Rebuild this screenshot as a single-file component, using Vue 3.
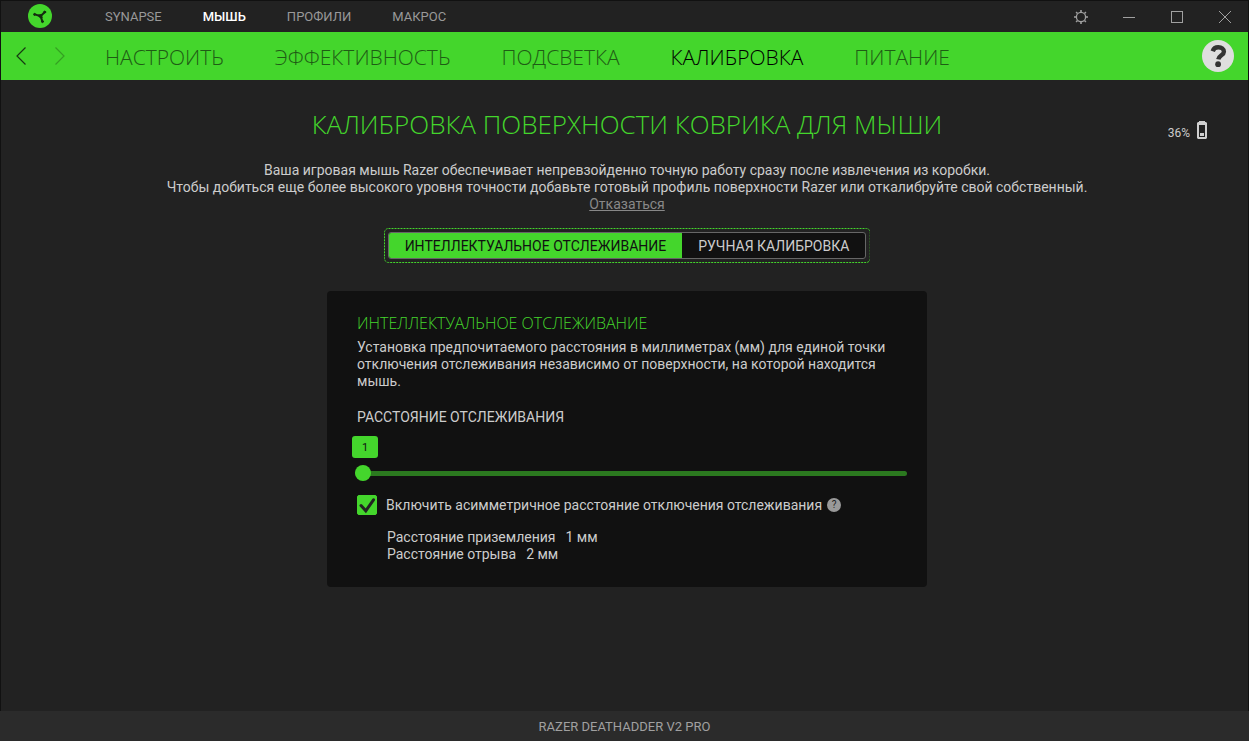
<script setup>
import { ref } from 'vue'

const topTabs = ['SYNAPSE', 'МЫШЬ', 'ПРОФИЛИ', 'МАКРОС']
const activeTop = ref('МЫШЬ')

const sections = ['НАСТРОИТЬ', 'ЭФФЕКТИВНОСТЬ', 'ПОДСВЕТКА', 'КАЛИБРОВКА', 'ПИТАНИЕ']
const activeSection = ref('КАЛИБРОВКА')

const modes = ['ИНТЕЛЛЕКТУАЛЬНОЕ ОТСЛЕЖИВАНИЕ', 'РУЧНАЯ КАЛИБРОВКА']
const activeMode = ref(modes[0])

const distance = ref(1)
const asymmetric = ref(true)
</script>

<template>
  <div class="window">
    <header class="titlebar">
      <div class="lead">
        <svg class="logo" viewBox="0 0 24 24" width="24" height="24" aria-hidden="true">
          <circle cx="12" cy="12" r="12" fill="#44d62c" />
          <g stroke="#142b10" stroke-width="2" stroke-linecap="round" fill="#142b10">
            <path d="M12.5 12.2L7 10.4M12.5 12.2L16.6 8.2M12.5 12.2L14.3 17.2" />
            <path d="M10.5 11L13.5 10.5L14.2 14L12 13.5Z" stroke-width="1" />
            <circle cx="6.6" cy="10.4" r="1" stroke-width="1" />
            <circle cx="16.7" cy="8.1" r="1" stroke-width="1" />
            <circle cx="14.5" cy="17.6" r="1" stroke-width="1" />
          </g>
        </svg>
      </div>
      <nav class="top-tabs" aria-label="Разделы">
        <a
          v-for="tab in topTabs"
          :key="tab"
          href="#"
          :class="{ active: tab === activeTop }"
          @click.prevent="activeTop = tab"
        >{{ tab }}</a>
      </nav>
      <div class="controls">
        <button type="button" aria-label="Настройки">
          <svg viewBox="0 0 16 16" width="16" height="16" fill="none" stroke="#a0a0a0">
            <circle cx="8" cy="8" r="4.6" stroke-width="1.3" />
            <path stroke-width="1.6" d="M8 1v2M8 13v2M1 8h2M13 8h2M3.1 3.1l1.2 1.2M11.7 11.7l1.2 1.2M3.1 12.9l1.2-1.2M11.7 4.3l1.2-1.2" />
          </svg>
        </button>
        <button type="button" aria-label="Свернуть">
          <svg viewBox="0 0 14 14" width="14" height="14" fill="none" stroke="#a0a0a0">
            <path d="M1 7.5h12" />
          </svg>
        </button>
        <button type="button" aria-label="Развернуть">
          <svg viewBox="0 0 14 14" width="14" height="14" fill="none" stroke="#a0a0a0">
            <rect x="1.5" y="1.5" width="11" height="11" />
          </svg>
        </button>
        <button type="button" aria-label="Закрыть">
          <svg viewBox="0 0 14 14" width="14" height="14" fill="none" stroke="#a0a0a0">
            <path d="M1 1l12 12M13 1L1 13" />
          </svg>
        </button>
      </div>
    </header>

    <div class="navbar">
      <div class="lead arrows">
        <button type="button" aria-label="Назад">
          <svg viewBox="0 0 10 18" width="10" height="18" fill="none" stroke="#173a12" stroke-width="1.2">
            <path d="M9.5 .5L1 9l8.500 8.500" />
          </svg>
        </button>
        <button type="button" aria-label="Вперёд" disabled>
          <svg viewBox="0 0 10 18" width="10" height="18" fill="none" stroke="#35a023" stroke-width="1.2">
            <path d="M.5 .5L9 9L.5 17.500" />
          </svg>
        </button>
      </div>
      <nav class="sections" aria-label="Мышь">
        <a
          v-for="item in sections"
          :key="item"
          href="#"
          :class="{ active: item === activeSection }"
          @click.prevent="activeSection = item"
        >{{ item }}</a>
      </nav>
      <button type="button" class="help" aria-label="Справка">
        <svg viewBox="0 0 32 32" width="32" height="32">
          <circle cx="16" cy="16" r="16" fill="#dedede" />
          <path d="M10.700 11.200C11.600 8.500 13.500 7.300 16.300 7.300C19.600 7.300 21.900 8.900 21.900 11.700C21.900 15.200 17 15.200 16.300 19.300" fill="none" stroke="#333" stroke-width="4.400" />
          <circle cx="16.100" cy="24.200" r="2.900" fill="#333" />
        </svg>
      </button>
    </div>

    <main class="content">
      <div class="heading">
        <h1>КАЛИБРОВКА ПОВЕРХНОСТИ КОВРИКА ДЛЯ МЫШИ</h1>
        <div class="battery">
          <span>36%</span>
          <svg viewBox="0 0 10 18" width="10" height="18" aria-hidden="true">
            <path fill="#d0d0d0" fill-rule="evenodd" d="M2 0h6v1h1l1 1v15l-1 1H1l-1-1V2l1-1h1zM2 4v12h6V4z" />
            <rect x="3" y="12" width="4" height="3" fill="#d0d0d0" />
          </svg>
        </div>
      </div>

      <p class="intro">
        Ваша игровая мышь Razer обеспечивает непревзойденно точную работу сразу после извлечения из коробки.<br>
        Чтобы добиться еще более высокого уровня точности добавьте готовый профиль поверхности Razer или откалибруйте свой собственный.<br>
        <a href="#" @click.prevent>Отказаться</a>
      </p>

      <div class="switch-frame">
        <svg class="focus-ring" aria-hidden="true">
          <rect x="0.5" y="0.5" rx="4" fill="none" stroke="#44d62c" stroke-dasharray="2 1" />
        </svg>
        <div class="switch">
          <button
            v-for="mode in modes"
            :key="mode"
            type="button"
            :class="{ active: mode === activeMode }"
            @click="activeMode = mode"
          >{{ mode }}</button>
        </div>
      </div>

      <section class="card">
        <h2>ИНТЕЛЛЕКТУАЛЬНОЕ ОТСЛЕЖИВАНИЕ</h2>
        <p class="about">
          Установка предпочитаемого расстояния в миллиметрах (мм) для единой точки отключения отслеживания независимо от поверхности, на которой находится мышь.
        </p>
        <label class="caption" for="distance">РАССТОЯНИЕ ОТСЛЕЖИВАНИЯ</label>
        <output class="bubble" for="distance">{{ distance }}</output>
        <input id="distance" v-model.number="distance" class="slider" type="range" min="1" max="3">
        <div class="option">
          <span class="tick">
            <input id="asymmetric" v-model="asymmetric" type="checkbox">
            <svg v-if="asymmetric" viewBox="0 0 20 20" width="20" height="20" aria-hidden="true">
              <path d="M4 10.500L8.800 15.800L16.500 4.800" fill="none" stroke="#222" stroke-width="3" stroke-linecap="round" />
            </svg>
          </span>
          <label for="asymmetric">Включить асимметричное расстояние отключения отслеживания</label>
          <button type="button" class="hint" aria-label="Подсказка">?</button>
        </div>
        <dl class="values">
          <div><dt>Расстояние приземления</dt><dd>1 мм</dd></div>
          <div><dt>Расстояние отрыва</dt><dd>2 мм</dd></div>
        </dl>
      </section>
    </main>

    <footer class="device">RAZER DEATHADDER V2 PRO</footer>
  </div>
</template>

<style>
body {
  background: #222;
}
</style>

<style scoped>
.window,
.window * {
  box-sizing: border-box;
}

.window {
  display: flex;
  flex-direction: column;
  min-height: 100vh;
  background: #222;
  color: #ccc;
  font-family: Roboto, "Liberation Sans", sans-serif;
  font-size: 14px;
  line-height: 17px;
}

button {
  padding: 0;
  border: 0;
  background: none;
  color: inherit;
  font: inherit;
  cursor: pointer;
}

a {
  color: inherit;
  text-decoration: none;
}

h1,
h2,
p,
dl,
dd {
  margin: 0;
}

svg {
  display: block;
}

.titlebar,
.navbar {
  display: flex;
  align-items: center;
  border: solid #111;
}

.titlebar {
  height: 32px;
  border-width: 1px 1px 0;
}

.navbar {
  height: 48px;
  border-width: 0 1px;
  background: #44d62c;
}

.lead {
  flex: 0 0 104px;
}

.logo {
  margin: -1px 0 0 27px;
}

.top-tabs {
  display: flex;
  gap: 41px;
  color: #999;
  font-size: 13px;
}

.top-tabs .active {
  color: #fff;
  font-weight: 500;
}

.controls {
  display: flex;
  margin-left: auto;
}

.controls button {
  display: grid;
  place-items: center;
  width: 48px;
  height: 31px;
  padding-left: 2px;
}

.arrows {
  display: flex;
  gap: 29px;
  padding-left: 15px;
}

.sections {
  display: flex;
  gap: 51px;
  color: #1f5c15;
  font-family: "Open Sans", "Noto Sans", sans-serif;
  font-size: 21px;
  font-weight: 300;
  line-height: 30px;
  padding-top: 1px;
}

.sections .active {
  color: #000;
}

.help {
  margin: 0 14px 0 auto;
}

.content {
  display: flex;
  flex: 1;
  flex-direction: column;
  align-items: center;
  padding: 25px 0 24px 5px;
  border: solid #111;
  border-width: 0 1px;
}

.heading {
  display: grid;
  grid-template-columns: 1fr auto 1fr;
  align-items: center;
  width: 100%;
  padding: 0 41px;
}

h1 {
  grid-column: 2;
  color: #44d62c;
  font-family: "Open Sans", "Noto Sans", sans-serif;
  font-size: 26px;
  font-weight: 300;
  line-height: 38px;
}

.battery {
  display: flex;
  align-items: center;
  justify-content: flex-end;
  gap: 7px;
  padding-top: 12px;
  font-size: 12px;
}

.battery span {
  padding-top: 6px;
}

.intro {
  margin-top: 19px;
  text-align: center;
}

.intro a {
  color: #888;
  text-decoration: underline;
}

.switch-frame {
  position: relative;
  margin-top: 15px;
  padding: 4px;
}

.focus-ring {
  position: absolute;
  inset: 0;
  width: 100%;
  height: 100%;
  pointer-events: none;
}

.focus-ring rect {
  width: calc(100% - 1px);
  height: calc(100% - 1px);
}

.switch {
  display: flex;
  height: 27px;
  overflow: hidden;
  border: 1px solid #666;
  border-radius: 3px;
  background: #111;
}

.switch button {
  padding: 2px 16px 0;
}

.switch .active {
  background: #44d62c;
  color: #111;
}

.card {
  display: flex;
  flex-direction: column;
  align-items: flex-start;
  width: 100%;
  max-width: 600px;
  margin-top: 28px;
  padding: 22px 20px 24px 30px;
  border-radius: 4px;
  background: #111;
}

h2 {
  color: #44d62c;
  font-family: "Open Sans", "Noto Sans", sans-serif;
  font-size: 16px;
  font-weight: 300;
  line-height: 20px;
}

.about {
  margin-top: 6px;
}

.caption {
  margin-top: 19px;
}

.bubble {
  display: grid;
  place-items: center;
  width: 26px;
  height: 22px;
  margin: 10px 0 0 -5px;
  border-radius: 3px;
  background: #44d62c;
  color: #111;
  font-size: 11px;
}

.slider {
  align-self: stretch;
  height: 16px;
  margin: 7px 0 0 -2px;
  appearance: none;
  background: none;
}

.slider::-webkit-slider-runnable-track {
  height: 5px;
  border-radius: 3px;
  background: #2b791f;
}

.slider::-webkit-slider-thumb {
  width: 16px;
  height: 16px;
  margin-top: -6px;
  appearance: none;
  border-radius: 50%;
  background: #44d62c;
}

.option {
  display: flex;
  align-items: center;
  margin-top: 14px;
}

.tick {
  position: relative;
  width: 20px;
  height: 20px;
  margin-right: 9px;
}

.tick input {
  display: block;
  width: 20px;
  height: 20px;
  margin: 0;
  appearance: none;
  border: 1px solid #44d62c;
  border-radius: 2px;
}

.tick input:checked {
  background: #44d62c;
}

.tick svg {
  position: absolute;
  inset: 0;
  pointer-events: none;
}

.hint {
  width: 14px;
  height: 14px;
  margin-left: 5px;
  border-radius: 50%;
  background: #999;
  color: #222;
  font-size: 10px;
  line-height: 14px;
}

.values {
  margin: 14px 0 0 30px;
}

.values div {
  display: flex;
  gap: 10px;
}

.device {
  height: 30px;
  background: #2b2b2b;
  color: #a0a0a0;
  font-size: 13px;
  line-height: 31px;
  text-align: center;
}
</style>
